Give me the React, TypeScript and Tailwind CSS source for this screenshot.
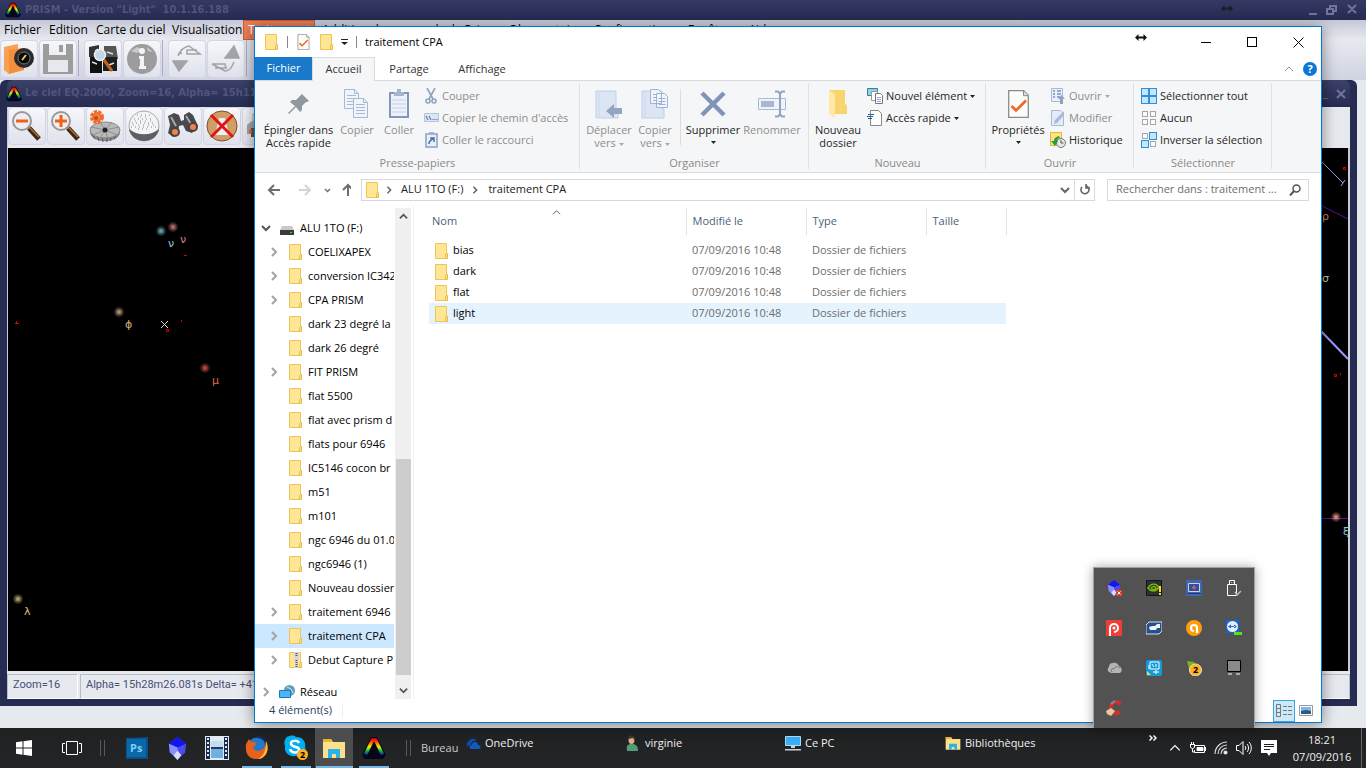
import React from 'react';

const files = ['bias', 'dark', 'flat', 'light'];

const tree = [
  { name: 'COELIXAPEX', open: true },
  { name: 'conversion IC342', open: true },
  { name: 'CPA PRISM', open: true },
  { name: 'dark 23 degré la' },
  { name: 'dark 26 degré' },
  { name: 'FIT PRISM', open: true },
  { name: 'flat 5500' },
  { name: 'flat avec prism d' },
  { name: 'flats pour 6946' },
  { name: 'IC5146 cocon br' },
  { name: 'm51' },
  { name: 'm101' },
  { name: 'ngc 6946 du 01.0' },
  { name: 'ngc6946 (1)' },
  { name: 'Nouveau dossier' },
  { name: 'traitement 6946', open: true },
  { name: 'traitement CPA', open: true, selected: true },
  { name: 'Debut Capture P', open: true, zip: true },
];

const Folder = ({ zip }: { zip?: boolean }) => (
  <svg width="13" height="16" viewBox="0 0 13 16" className="shrink-0">
    <path d="M.5.5h11v15H.5z" fill="#ffe596" stroke="#ecc757" />
    <path d="M10.500 15.500v-4l1-1h1v5z" fill="#ffe08a" stroke="#e6bd45" />
    {zip && <path d="M5 0h5v7l-1 2v7H6V9L5 7z" fill="#d8d8d8" />}
    {zip && <path d="M7.500 1v4M7.500 8v8" stroke="#555" strokeWidth="2" strokeDasharray="1 1" />}
  </svg>
);

const PrismLogo = ({ id, size }: { id: string; size: number }) => (
  <svg width={size} height={size} viewBox="0 0 24 24" className="shrink-0">
    <defs>
      <linearGradient id={id} x1="0" y1="0" x2="0" y2="1">
        <stop offset="0" stopColor="#f01010" />
        <stop offset=".28" stopColor="#ff9000" />
        <stop offset=".48" stopColor="#e8f000" />
        <stop offset=".72" stopColor="#10c838" />
        <stop offset="1" stopColor="#1428a0" />
      </linearGradient>
    </defs>
    <path d="M9 1h6l9 18-3 4H3l-3-4z" fill="#07071c" />
    <path d="M3.500 18.500L10.500 4h3l7 14.500" fill="none" stroke={`url(#${id})`} strokeWidth="3.500" strokeLinejoin="round" />
  </svg>
);

const Chevron = ({ d, color = '#555', size = 10, w = 2 }: { d: 'up' | 'down' | 'right'; color?: string; size?: number; w?: number }) => (
  <svg width={size} height={size} viewBox="0 0 10 10" fill="none" stroke={color} strokeWidth={w} className="shrink-0">
    <path d={d === 'up' ? 'M1 7l4-4 4 4' : d === 'down' ? 'M1 3l4 4 4-4' : 'M3 1l4 4-4 4'} />
  </svg>
);

const Caret = ({ color = '#222' }: { color?: string }) => (
  <svg width="5" height="3" viewBox="0 0 5 3" className="inline-block shrink-0 align-middle">
    <path d="M0 0h5L2.500 3z" fill={color} />
  </svg>
);

const Big = ({ icon, lines, off, caret, className }: { icon: React.ReactNode; lines: string[]; off?: boolean; caret?: boolean; className: string }) => (
  <button className={`flex flex-col items-center pt-[6px] leading-[13px] whitespace-nowrap ${off ? 'text-[#8d8d8d]' : 'text-[#262626]'} ${className}`}>
    <span className="mb-[2px] flex h-[34px] items-center">{icon}</span>
    {lines.map((l, i) => (
      <span key={l}>
        {l} {caret && lines.length > 1 && i === 1 && <Caret color="#aaa" />}
      </span>
    ))}
    {caret && lines.length === 1 && <span className="flex h-[13px] items-center"><Caret /></span>}
  </button>
);

const Small = ({ icon, label, off, caret }: { icon: React.ReactNode; label: string; off?: boolean; caret?: boolean }) => (
  <button className={`flex h-[22px] items-center gap-[3px] whitespace-nowrap ${off ? 'text-[#8d8d8d]' : 'text-[#262626]'}`}>
    <span className="flex w-4 shrink-0 justify-center">{icon}</span>
    <span>{label}</span>
    {caret && <span className="flex"><Caret color={off ? '#aaa' : '#222'} /></span>}
  </button>
);

const Group = ({ label, className, children }: { label: string; className: string; children: React.ReactNode }) => (
  <section className={`relative flex shrink-0 flex-col ${className}`}>
    <div className="flex h-[75px]">{children}</div>
    <div className="text-center leading-[14px] text-[#8a8a8a]">{label}</div>
    <span className="absolute top-[2px] right-0 h-[86px] w-px bg-[#e0e1e3]" />
  </section>
);

const Page = ({ x, y }: { x: number; y: number }) => (
  <g transform={`translate(${x} ${y})`}>
    <path d="M.5.5h10l4 4v15H.5z" fill="#f0f4fb" stroke="#a9b9d3" />
    <path d="M10.500.5v4h4M3 6.500h9M3 9.500h9M3 12.500h9M3 15.500h9" fill="none" stroke="#a9b9d3" />
  </g>
);

const CopyIcon = () => (
  <svg width="26" height="30" viewBox="0 0 26 30"><Page x={0} y={0} /><Page x={9} y={9} /></svg>
);

const CheckDoc = ({ w, h }: { w: number; h: number }) => (
  <svg width={w} height={h} viewBox="0 0 21 28">
    <path d="M.7.7h15l4.600 4.600v22H.7z" fill="#fbfbfb" stroke="#8c8c8c" strokeWidth="1.300" />
    <path d="M15.500.7v5h5" fill="#ddd" stroke="#8c8c8c" />
    <path d="M3.500 16l4.500 4.500 10-10" fill="none" stroke="#f4641c" strokeWidth="2.600" />
  </svg>
);

const DestIcon = ({ copy }: { copy?: boolean }) => (
  <svg width="28" height="30" viewBox="0 0 28 30">
    <path d="M1 2h20v18h2v9H1z" fill="#dbe5f4" stroke="#c0cfe6" />
    <path d="M4 3v25" stroke="#ccd9ed" />
    {copy ? (
      <>
        <path d="M9.500.5h8l3 3v11h-11zM15.500 4.500h8l3 3v11h-11z" fill="#f0f4fb" stroke="#9fb2d1" />
        <path d="M12 5.500h3M12 8.500h3M12 11.500h3M17.500 9.500h7M17.500 12.500h7M17.500 15.500h7" stroke="#9fb2d1" />
      </>
    ) : (
      <path d="M11 22l8-7v4h8v6h-8v4z" fill="#95a5c0" />
    )}
  </svg>
);

const Squares = ({ on }: { on: boolean[] }) => (
  <svg width="16" height="16" viewBox="0 0 16 16">
    {on.map((v, i) => (
      <rect
        key={i}
        x={(i % 2) * 8 + (v ? 0.5 : 1.5)}
        y={Math.floor(i / 2) * 8 + (v ? 0.5 : 1.5)}
        width={v ? 7 : 5}
        height={v ? 7 : 5}
        fill={v ? '#c4e6fb' : '#fafafa'}
        stroke={v ? '#2b90d8' : '#a6a6a6'}
      />
    ))}
  </svg>
);

const Magnifier = ({ plus }: { plus?: boolean }) => (
  <svg width="32" height="32" viewBox="0 0 32 32">
    <path d="M18 18l10 11" stroke="#3c2818" strokeWidth="5" />
    <path d="M18 17l10 10" stroke="#b56c26" strokeWidth="1.500" />
    <circle cx="11" cy="11" r="9" fill="#eceef2" stroke="#999" strokeWidth="2" />
    <path d={plus ? 'M5 11h12M11 5v12' : 'M5 11h12'} stroke="#f06018" strokeWidth="3" />
  </svg>
);

const mainTools = [
  <svg key="cam" width="32" height="32" viewBox="0 0 32 32">
    <path d="M1 4l14-3v26L6 31 1 27z" fill="#f9a055" /><path d="M6 7l15-2v22L6 31z" fill="#f28f3b" />
    <circle cx="21" cy="15" r="10" fill="#2a2a2e" /><circle cx="21" cy="15" r="6" fill="#090909" stroke="#777" /><path d="M19 17l4-5" stroke="#e0d35b" strokeWidth="2" />
  </svg>,
  <svg key="save" width="32" height="32" viewBox="0 0 32 32">
    <path d="M1 1h6v11h17V1h7v30H1z" fill="#9c9c9c" /><path d="M17 2h4v7h-4z" fill="#9c9c9c" /><path d="M6 17h20v12H6z" fill="#e7e8ee" />
  </svg>,
  <svg key="pics" width="32" height="32" viewBox="0 0 32 32">
    <path d="M2 4l10-2v12H2z" fill="#333" /><path d="M17 3h12l2 13H17z" fill="#555" /><path d="M3 14h12v16H3z" fill="#111" /><path d="M16 14h14v14H16z" fill="#1d1d1d" />
    <path d="M5 19l5 2M20 9l6 2M8 8l3-2M22 22l5-2" stroke="#ddd" strokeWidth="1.500" />
    <circle cx="13" cy="12" r="5.500" fill="#c2d5ea" stroke="#eee" strokeWidth="1.500" /><path d="M17 17l8 11" stroke="#c8641a" strokeWidth="3" />
  </svg>,
  <svg key="info" width="32" height="32" viewBox="0 0 32 32">
    <circle cx="16" cy="16" r="15" fill="#9c9c9c" /><path d="M5 8l6-4 5 2-5 4zM21 4l6 5-5-1z" fill="#c9cad0" /><circle cx="16" cy="8" r="3" fill="#f4f4f8" /><path d="M13 13h5v10h2v3h-7v-3h1v-7h-1z" fill="#f4f4f8" />
  </svg>,
  <svg key="down" width="32" height="32" viewBox="0 0 32 32" fill="none" stroke="#a3a3a5" strokeWidth="1.500">
    <path d="M2 18h14L8 28z" fill="#a3a3a5" /><path d="M7 13c2-5 5-9 11-10l11 8-13 0 0-4 10 0M7 11l4-1" />
  </svg>,
  <svg key="up" width="32" height="32" viewBox="0 0 32 32" fill="none" stroke="#a3a3a5" strokeWidth="1.500">
    <path d="M15 15h14L24 3z" fill="#a3a3a5" /><path d="M24 19c-2 5-4 9-9 9L2 21l13 0 1 4-11 0" />
  </svg>,
];

const skyTools = [
  <Magnifier key="minus" />,
  <Magnifier key="plus" plus />,
  <svg key="gear" width="32" height="32" viewBox="0 0 32 32">
    <path d="M1 20v3c2 11 28 11 30 0v-3z" fill="#8b8b8b" /><path d="M3 24l3 5M8 26l2 5M13 27l1 5M18 27v5M23 26l-2 5M28 24l-3 5" stroke="#555" />
    <ellipse cx="16" cy="20" rx="15" ry="8" fill="#b9b9b9" stroke="#8a8a8a" /><path d="M16 20L2 17M16 20L4 25M16 20L11 12M16 20l7-8M16 20l14-3M16 20l12 5M16 20l3 8M16 20l-5 8" stroke="#8f8f8f" />
    <circle cx="16" cy="20" r="2.500" fill="#222" /><circle cx="8" cy="7" r="5" fill="#f47d45" stroke="#f26b2a" strokeWidth="4" strokeDasharray="3 1" /><circle cx="7" cy="8" r="2" fill="#c04c12" />
  </svg>,
  <svg key="globe" width="32" height="32" viewBox="0 0 32 32">
    <circle cx="16" cy="16" r="15" fill="#f4f4f6" stroke="#aaa" /><path d="M1 19c8 7 22 7 30 0-1 7-7 12-15 12S2 26 1 19" fill="#5f5f63" />
    <path d="M6 9h20M4 13h24M3 17h26M9 5h14M10 19h12" stroke="#86819d" strokeDasharray="1 3" /><path d="M7 11h20M5 15h22M12 7h10" stroke="#6aa77d" strokeDasharray="1 4" />
  </svg>,
  <svg key="bino" width="32" height="32" viewBox="0 0 32 32">
    <path d="M1 6l6-3 5 2 2 6 3-1 0-5 5-3 4 3 5 11-6 7-6-2-3-6-4 1-1 8-5 3-5-4 2-8z" fill="#4a4a4e" /><path d="M4 7l5 9M19 6l5 8" stroke="#a5a5a8" strokeWidth="2" />
    <circle cx="8" cy="22" r="4" fill="#f08050" stroke="#444" strokeWidth="2" /><circle cx="26" cy="17" r="4" fill="#f08050" stroke="#444" strokeWidth="2" />
  </svg>,
  <svg key="nodome" width="32" height="32" viewBox="0 0 32 32">
    <circle cx="16" cy="16" r="15" fill="#d19c66" stroke="#7e4f2a" /><path d="M9 25l4-17h6l4 17z" fill="#eceef2" /><path d="M5 5l22 22M27 5L5 27" stroke="#df1414" strokeWidth="3" />
  </svg>,
  <svg key="print" width="32" height="32" viewBox="0 0 32 32">
    <path d="M8 4h16v8H8z" fill="#fff" stroke="#aaa" /><path d="M2 15l5-4h18l5 4v9H2z" fill="#a5a5a8" /><path d="M6 18h20v9H6z" fill="#555" /><path d="M4 20h3v3H4z" fill="#f06020" />
  </svg>,
];

const Star = ({ x, y, c }: { x: number; y: number; c: string }) => (
  <g fill={c}>
    <circle cx={x} cy={y} r="5" opacity=".2" />
    <circle cx={x} cy={y} r="3.500" opacity=".35" />
    <circle cx={x} cy={y} r="2" opacity=".7" />
  </g>
);

const ToolButton = ({ children }: { children: React.ReactNode }) => (
  <button className="flex h-[38px] w-[38px] shrink-0 items-center justify-center rounded border border-[#d3d5e2] bg-linear-to-b from-[#f6f7fa] to-[#dfe1ec]">{children}</button>
);

function SkyWindow() {
  return (
    <div className="mr-[9px] mb-[22px] flex min-h-0 flex-1 flex-col rounded-t-md border-x-[7px] border-b-[7px] border-[#262b52] bg-[#262b52]">
      <div className="flex h-[27px] shrink-0 items-center rounded-t-md bg-linear-to-b from-[#3b4168] to-[#262b52] font-['DejaVu_Sans_Condensed','DejaVu_Sans',sans-serif] text-[11px] font-bold text-[#50557a]">
        <span className="-ml-1 flex w-[22px] justify-center"><PrismLogo id="pl2" size={16} /></span>
        <span className="whitespace-nowrap">Le ciel EQ.2000, Zoom=16, Alpha= 15h11m</span>
        <span className="mr-1 ml-auto flex gap-2 text-[#636a90]">
          <span>_</span>
          <svg width="10" height="10" viewBox="0 0 10 10" stroke="#70769a" strokeWidth="2" className="mt-1"><path d="M1 1l8 8M9 1L1 9" /></svg>
        </span>
      </div>
      <div className="flex h-[41px] shrink-0 gap-px border-l border-[#c8cada] bg-[#e6e9ee]">
        {skyTools.map((t, i) => <ToolButton key={i}>{t}</ToolButton>)}
      </div>
      <div className="relative min-h-0 flex-1 overflow-hidden border-r-2 border-l border-[#c8cada] bg-black">
        <svg width="246" height="523" viewBox="8 148 246 523" className="absolute top-0 left-0 font-['DejaVu_Sans',sans-serif] text-[11px]">
          <Star x={161} y={231} c="#6fb4c4" />
          <Star x={173} y={227} c="#d07a78" />
          <Star x={119} y={312} c="#c9a582" />
          <Star x={205} y={368} c="#cf5450" />
          <Star x={18} y={599} c="#c4b878" />
          <text x="168" y="247" fill="#8cc4d8">ν</text>
          <text x="180" y="243" fill="#c98480">ν</text>
          <text x="125" y="328" fill="#d4b080">ϕ</text>
          <text x="212" y="384" fill="#e06850">μ</text>
          <text x="24" y="615" fill="#dcc878">λ</text>
          <path d="M161 321l7 7M168 321l-7 7" stroke="#ddd" />
          <path d="M184 255.500h3M181.500 320v2M15 323.500h4M16.500 321v2M166.500 329.500h2v2h-2z" stroke="#e00000" fill="none" />
        </svg>
        <svg width="40" height="523" viewBox="1308 148 40 523" className="absolute top-0 right-0 font-['DejaVu_Sans',sans-serif] text-[11px]">
          <path d="M1318 158l25 25M1345 180l-4 6" stroke="#9a9af0" fill="none" />
          <path d="M1318 204l30 15M1308 518.500h40" stroke="#5a109c" />
          <path d="M1318 328l30 31" stroke="#9a9aff" strokeWidth="2" />
          <path d="M1343.500 167.500h2v2h-2zM1334.500 374.500h2v2h-2zM1340.500 373v2" stroke="#e00000" fill="none" />
          <text x="1322" y="220" fill="#d68468">ρ</text>
          <text x="1322" y="282" fill="#cfcf90">σ</text>
          <Star x={1336} y={517} c="#ef9c88" />
          <text x="1343" y="535" fill="#8cc4d8">ξ</text>
        </svg>
      </div>
      <div className="flex h-[28px] shrink-0 gap-[2px] bg-[#e6e9ee] pt-[3px] font-['Roboto',sans-serif] text-[11px] leading-[19px] text-[#484d78]">
        <span className="w-[71px] border border-[#b9bcca] border-r-white border-b-white px-[5px]">Zoom=16</span>
        <span className="flex-1 border border-[#b9bcca] border-b-white px-[5px] whitespace-nowrap">Alpha= 15h28m26.081s Delta= +41175</span>
      </div>
    </div>
  );
}

function PrismWindow() {
  return (
    <div className="flex h-full flex-col bg-[#e6e9ee]">
      <div className="flex h-5 shrink-0 items-center bg-linear-to-b from-[#333963] to-[#262b52] font-['DejaVu_Sans_Condensed','DejaVu_Sans',sans-serif] text-[11px] font-bold text-[#50557a]">
        <span className="flex w-[25px] justify-center"><PrismLogo id="pl1" size={16} /></span>
        <span className="whitespace-pre">PRISM - Version "Light"  10.1.16.188</span>
        <svg width="52" height="12" viewBox="0 0 52 12" className="mr-2 ml-auto" stroke="#70769a" strokeWidth="2" fill="none">
          <path d="M3 10h8M21 5h6v5h-6zM24 4V2h6v5h-2M42 1l8 8M50 1l-8 8" />
        </svg>
      </div>
      <nav className="flex h-5 shrink-0 items-center bg-linear-to-b from-[#c6c8d8] to-[#e7e9ef] pl-1 text-[12px] leading-3 whitespace-nowrap text-black">
        <a href="#" className="w-[45px]">Fichier</a>
        <a href="#" className="w-[47px]">Edition</a>
        <a href="#" className="w-[76px]">Carte du ciel</a>
        <a href="#" className="w-[71px]">Visualisation</a>
        <a href="#" className="h-5 w-[72px] border border-[#c85c38] bg-[#ec7c54] pl-1 leading-[18px] text-white">Traitement</a>
        <span className="flex gap-3 pl-[7px]">
          <a href="#">Additional commands de Prism</a>
          <a href="#">Observatoire</a>
          <a href="#">Configurations</a>
          <a href="#">Fenêtres</a>
          <a href="#">Aide</a>
        </span>
      </nav>
      <div className="flex h-10 shrink-0 gap-px bg-linear-to-b from-[#e6e9ee] to-[#d0d3e1]">
        {mainTools.map((t, i) => (
          <React.Fragment key={i}>
            <ToolButton>{t}</ToolButton>
            {i % 2 === 1 && <span className="mr-1 h-9 w-px bg-[#a9acc4]" />}
          </React.Fragment>
        ))}
      </div>
      <SkyWindow />
    </div>
  );
}

function Ribbon() {
  return (
    <div className="flex h-[93px] shrink-0 overflow-hidden border-y border-[#dadbdc] bg-[#f5f6f7]">
      <Group label="Presse-papiers" className="w-[325px]">
        <Big
          className="ml-[3px] w-[81px]"
          lines={['Épingler dans', 'Accès rapide']}
          icon={<svg width="22" height="22" viewBox="0 0 22 22" fill="#8f979f"><path d="M14 1l7 7-2 1-1 0-4 4 0 4-2 2-4-5-7 7-1-1 7-7-5-4 2-2 4 0 4-4z" /></svg>}
        />
        <Big className="w-[36px]" off lines={['Copier']} icon={<CopyIcon />} />
        <Big
          className="w-[48px]"
          off
          lines={['Coller']}
          icon={
            <svg width="20" height="30" viewBox="0 0 20 30">
              <path d="M1 4h18v24H1z" fill="#edf2fa" stroke="#8395b8" strokeWidth="2" /><path d="M5 3h3V0h4v3h3v4H5z" fill="#a9b5ca" />
              <path d="M3 11h14M3 15h14M3 19h14M3 23h14" stroke="#c3d0e4" />
            </svg>
          }
        />
        <div className="flex flex-col pt-1">
          <Small off label="Couper" icon={<svg width="12" height="16" viewBox="0 0 12 16" fill="none" stroke="#8fa2c0" strokeWidth="1.600"><path d="M2 0l6 11M10 0L4 11" /><circle cx="3" cy="13" r="2" /><circle cx="9" cy="13" r="2" /></svg>} />
          <Small off label="Copier le chemin d'accès" icon={<svg width="15" height="10" viewBox="0 0 15 10"><path d="M.5.5h14v8H.5z" fill="#dbe5f3" stroke="#b4c4dd" /><path d="M2 3l2 4M5 3l2 4M8.500 6.500h1M10.500 6.500h1M12.500 6.500h1" stroke="#4a6690" /></svg>} />
          <Small off label="Coller le raccourci" icon={<svg width="13" height="16" viewBox="0 0 13 16"><path d="M1 2h11v13H1z" fill="#eaf0f9" stroke="#8ba0c4" strokeWidth="1.500" /><path d="M4 0h5v3H4z" fill="#a5b4cd" /><path d="M4 12c0-3 1-4 4-5M5 6h4v4" stroke="#4c6da0" strokeWidth="1.500" fill="none" /></svg>} />
        </div>
      </Group>
      <Group label="Organiser" className="w-[229px]">
        <Big className="ml-[2px] w-[54px]" off caret lines={['Déplacer', 'vers']} icon={<DestIcon />} />
        <Big className="w-[38px]" off caret lines={['Copier', 'vers']} icon={<DestIcon copy />} />
        <span className="mt-2 ml-[6px] h-[56px] w-px bg-[#dcdde0]" />
        <Big className="w-[64px]" caret lines={['Supprimer']} icon={<svg width="26" height="26" viewBox="0 0 26 26" stroke="#8193b6" strokeWidth="4.500"><path d="M2 2l22 22M24 2L2 24" /></svg>} />
        <Big
          className="w-[54px]"
          off
          lines={['Renommer']}
          icon={
            <svg width="28" height="28" viewBox="0 0 28 28" fill="none" stroke="#a9bad5">
              <path d="M.5 8.500h27v11H.5z" fill="#eef3fb" /><path d="M3 11h13v6H3z" fill="#a8b6d0" stroke="none" /><path d="M17 1.500h3l2 2 2-2h3M22 3v22M17 26.500h3l2-2 2 2h3" stroke="#93a4c1" strokeWidth="2" />
            </svg>
          }
        />
      </Group>
      <Group label="Nouveau" className="w-[177px]">
        <Big
          className="ml-[2px] w-[54px]"
          lines={['Nouveau', 'dossier']}
          icon={<svg width="19" height="28" viewBox="0 0 19 28"><path d="M0 0h16v14l2 1v9H5z" fill="#f7d56f" /><path d="M0 0l6 4v24L0 24z" fill="#ffe9a4" /></svg>}
        />
        <div className="flex flex-col pt-1 pl-[2px]">
          <Small caret label="Nouvel élément" icon={<svg width="16" height="16" viewBox="0 0 16 16"><path d="M.5.5h10v7H.5z" fill="#8fd0ee" stroke="#3a7c9c" /><path d="M4.500 3.500h6v9h-6z" fill="#fff" stroke="#999" /><path d="M8.500 5.500h5l2 2v8h-7z" fill="#fff" stroke="#777" /><path d="M10 9.500h4M10 11.500h4M10 13.500h4" stroke="#8fa8d8" /></svg>} />
          <Small caret label="Accès rapide" icon={<svg width="16" height="16" viewBox="0 0 16 16"><path d="M3.500.5h8l3 3v12h-11z" fill="#fff" stroke="#888" /><path d="M1 4.500h6M0 6.500h6M1 8.500h4" stroke="#1d5b9e" /></svg>} />
        </div>
      </Group>
      <Group label="Ouvrir" className="w-[148px]">
        <Big className="ml-[2px] w-[60px]" caret lines={['Propriétés']} icon={<CheckDoc w={21} h={28} />} />
        <div className="flex flex-col pt-1 pl-[2px]">
          <Small off caret label="Ouvrir" icon={<svg width="14" height="16" viewBox="0 0 14 16"><path d="M.5.5h11v13H.5z" fill="#e9effa" stroke="#a9b9d5" /><path d="M2 3h2M2 6h2M2 9h2M6 3h4M6 6h4M6 9h3" stroke="#7d94bd" strokeWidth="1.500" /><path d="M7 11l3.500-4 3.500 4h-2v5H9v-5z" fill="#8fa2c4" /></svg>} />
          <Small off label="Modifier" icon={<svg width="14" height="16" viewBox="0 0 14 16"><path d="M.5.5h9l3 3v12H.5z" fill="#e3ebf7" stroke="#a9b9d5" /><path d="M3 14l1-4 9-9v4l-7 8z" fill="#a8bad8" /></svg>} />
          <Small label="Historique" icon={<svg width="16" height="16" viewBox="0 0 16 16"><path d="M.5.5h11v13H.5z" fill="#ffe284" stroke="#e0b63c" /><circle cx="11" cy="11" r="4.500" fill="#e7e7e7" stroke="#777" /><path d="M11 8v3h2.500" stroke="#555" fill="none" /><path d="M9 4C5 5 4 7 4 9H1l4 5 3-5H7c0-2 1-3 3-3z" fill="#27a03a" /></svg>} />
        </div>
      </Group>
      <Group label="Sélectionner" className="w-[138px]">
        <div className="flex flex-col pt-1 pl-[7px]">
          <Small label="Sélectionner tout" icon={<Squares on={[true, true, true, true]} />} />
          <Small label="Aucun" icon={<Squares on={[false, false, false, false]} />} />
          <Small label="Inverser la sélection" icon={<Squares on={[false, true, true, false]} />} />
        </div>
      </Group>
    </div>
  );
}

function Explorer() {
  return (
    <div className="absolute top-[26px] right-11 bottom-[5px] left-[254px] flex flex-col border border-[#0078d7] bg-white text-[11px] shadow-[0_2px_14px_rgba(0,0,0,0.45)]">
      <div className="flex h-[30px] shrink-0 items-center pl-[10px]">
        <Folder />
        <span className="mx-[9px] h-3 w-px bg-[#888]" />
        <CheckDoc w={13} h={16} />
        <span className="ml-[10px] flex"><Folder /></span>
        <svg width="7" height="6" viewBox="0 0 7 6" className="ml-2"><path d="M0 0h7v1H0zM0 3h7L3.500 6z" fill="#222" /></svg>
        <span className="mx-[8px] h-3 w-px bg-[#888]" />
        <h1 className="leading-3 text-black">traitement CPA</h1>
        <div className="ml-auto flex h-full">
          <button aria-label="Réduire" className="flex w-[46px] items-center justify-center"><span className="h-px w-[10px] bg-black" /></button>
          <button aria-label="Agrandir" className="flex w-[46px] items-center justify-center"><span className="h-[10px] w-[10px] border border-black" /></button>
          <button aria-label="Fermer" className="flex w-[46px] items-center justify-center">
            <svg width="11" height="11" viewBox="0 0 11 11" stroke="#000"><path d="M.5.5l10 10M10.500.5l-10 10" /></svg>
          </button>
        </div>
      </div>
      <div className="relative z-10 -mb-px flex h-6 shrink-0 text-[#333]">
        <button className="mb-px w-[57px] bg-[#1979ca] text-white">Fichier</button>
        <button className="w-[63px] border border-b-0 border-[#dadbdc] bg-[#f5f6f7]">Accueil</button>
        <button className="w-[68px]">Partage</button>
        <button className="w-[78px]">Affichage</button>
        <div className="mr-1 ml-auto flex items-center gap-[9px]">
          <Chevron d="up" color="#999" w={1} />
          <button className="h-[14px] w-[14px] rounded-full bg-[#0a78d4] text-[11px] leading-[14px] font-bold text-white">?</button>
        </div>
      </div>
      <Ribbon />
      <div className="flex h-[33px] shrink-0 items-center pl-3">
        <svg width="84" height="14" viewBox="0 0 84 14" fill="none" stroke="#6e6e6e" strokeWidth="2">
          <path d="M1.500 7H13M7 2L2 7l5 5" />
          <path d="M32 7h11.500M38 2l5 5-5 5" stroke="#d4d4d4" />
          <path d="M58 6l2.500 2.500L63 6" strokeWidth="1.500" />
          <path d="M81 1.500V13M76 7l5-5 5 5" />
        </svg>
        <div className="ml-[10px] flex h-[22px] flex-1 items-center border border-[#d9d9d9] pl-1 text-[#222]">
          <Folder />
          <span className="mx-[6px]"><Chevron d="right" color="#666" size={8} /></span>
          <span className="ml-[2px]">ALU 1TO (F:)</span>
          <span className="mx-2"><Chevron d="right" color="#666" size={8} /></span>
          <span className="ml-px">traitement CPA</span>
          <span className="mr-[4px] ml-auto"><Chevron d="down" color="#666" /></span>
          <button aria-label="Actualiser" className="flex h-full w-5 items-center justify-center border-l border-[#d9d9d9]">
            <svg width="10" height="11" viewBox="0 0 10 11" fill="none" stroke="#666" strokeWidth="1.600"><path d="M6.500 2A4 4 0 1 1 2 3M6 0v4h4" /></svg>
          </button>
        </div>
        <div className="mr-3 ml-3 flex h-[22px] w-[202px] items-center border border-[#d9d9d9] pr-[7px] pl-2">
          <input aria-label="Rechercher" className="min-w-0 flex-1 text-[11px] outline-none placeholder:text-[#6d6d6d]" placeholder="Rechercher dans : traitement ..." />
          <svg width="12" height="12" viewBox="0 0 12 12" fill="none" stroke="#555" strokeWidth="1.500"><circle cx="7.500" cy="4.500" r="3.500" /><path d="M5 7l-4 4.500" strokeWidth="2" /></svg>
        </div>
      </div>
      <div className="flex min-h-0 flex-1">
        <div className="mt-2 h-[485px] w-[139px] shrink-0 overflow-hidden pt-[2px] whitespace-nowrap text-black">
          <div className="flex h-6 items-center pl-[6px]">
            <Chevron d="down" />
            <svg width="14" height="9" viewBox="0 0 14 9" className="mt-1 mr-[6px] ml-[9px] shrink-0"><path d="M2 0h10l2 4H0z" fill="#c9c9c9" /><path d="M0 4h14v5H0z" fill="#3a3a3a" /><path d="M10 6h2v1h-2z" fill="#35e04a" /></svg>
            ALU 1TO (F:)
          </div>
          {tree.map((t) => (
            <div key={t.name} className={`flex h-6 items-center gap-[6px] pl-[14px] ${t.selected ? 'bg-[#cce8ff]' : ''}`}>
              <span className="-mr-px flex w-[15px] shrink-0">{t.open && <Chevron d="right" color="#a2a2a2" />}</span>
              <Folder zip={t.zip} />
              <span className="shrink-0">{t.name}</span>
            </div>
          ))}
          <div className="mt-[11px] flex h-[18px] items-center pl-[6px] leading-[14px]">
            <Chevron d="right" color="#a2a2a2" />
            <svg width="16" height="14" viewBox="0 0 16 14" className="mr-[5px] ml-2 shrink-0"><circle cx="10.500" cy="5.500" r="5.500" fill="#5f9dbd" /><path d="M8 2l4 2 2 4" stroke="#cfe6ef" fill="none" /><path d="M.5 5.500h11v7H.5z" fill="#4cb5f5" stroke="#1d79bb" /></svg>
            Réseau
          </div>
        </div>
        <div className="mt-[2px] ml-px flex h-[491px] w-4 shrink-0 flex-col items-center bg-[#f0f0f0] py-1">
          <Chevron d="up" size={9} />
          <span className="mt-auto mb-[11px] h-[216px] w-[15px] bg-[#cdcdcd]" />
          <Chevron d="down" size={9} />
        </div>
        <div className="mr-[15px] ml-[2px] w-px bg-[#f0f0f0]" />
        <div className="pt-[2px]">
          <table className="table-fixed border-collapse text-left">
            <thead>
              <tr className="h-[27px] text-[#4c607a]">
                <th className="relative w-[257px] border-r border-[#e5e5e5] pl-[3px] font-normal">
                  Nom
                  <span className="absolute top-0 left-[123px]"><Chevron d="up" size={9} w={1} /></span>
                </th>
                <th className="w-[120px] border-r border-[#e5e5e5] pl-[6px] font-normal">Modifié le</th>
                <th className="w-[120px] border-r border-[#e5e5e5] pl-[6px] font-normal">Type</th>
                <th className="w-[80px] border-r border-[#e5e5e5] pl-[6px] font-normal">Taille</th>
              </tr>
              <tr className="h-[5px]"><td colSpan={4} /></tr>
            </thead>
            <tbody>
              {files.map((f) => (
                <tr key={f} className={`h-[21px] text-[#6d6d6d] ${f === 'light' ? 'bg-[#e5f3ff]' : ''}`}>
                  <td className="pl-[6px]"><div className="flex items-center gap-[5px] text-black"><Folder />{f}</div></td>
                  <td className="pl-[6px]">07/09/2016 10:48</td>
                  <td className="pl-[6px]">Dossier de fichiers</td>
                  <td />
                </tr>
              ))}
            </tbody>
          </table>
        </div>
      </div>
      <div className="flex h-[23px] shrink-0 items-center bg-white pl-[14px] text-[#27415e]">
        4 élément(s)
        <span className="ml-[10px] h-3 w-px bg-[#eee]" />
        <button aria-label="Détails" className="ml-auto flex h-[22px] w-[22px] items-center justify-center border border-[#3ba3dd] bg-[#cde8f6]">
          <svg width="16" height="14" viewBox="0 0 16 14" fill="none" stroke="#777"><path d="M.5.5h4v12h-4zM.5 4.500h4M.5 8.500h4M7 2.500h4M12 2.500h4M7 6.500h4M12 6.500h4M7 10.500h4M12 10.500h4" /></svg>
        </button>
        <button aria-label="Grandes icônes" className="mr-2 ml-1">
          <svg width="14" height="11" viewBox="0 0 14 11"><path d="M.5.5h13v10H.5z" fill="#fff" stroke="#999" /><path d="M2 2h10v4H2z" fill="#7fb6ea" /><path d="M2 6l5-1 5 1v3H2z" fill="#2b5c78" /></svg>
        </button>
      </div>
    </div>
  );
}

const Gem = ({ s }: { s: number }) => (
  <svg width={s} height={s} viewBox="0 0 24 24"><path d="M12 0l9 7-1 9-8 8-8-8-1-9z" fill="#4a4cf0" /><path d="M12 0l9 7-9 4-9-4z" fill="#1414f0" /><path d="M12 11v13l-8-8-1-9z" fill="#8a8ef8" /><path d="M12 14l4 5-4 5-4-5z" fill="#dcdcff" /></svg>
);

const trayIcons = [
  <span key="a" className="relative flex"><Gem s={16} /><svg width="6" height="6" viewBox="0 0 6 6" className="absolute right-0 bottom-0"><path d="M0 0h6v6H0z" fill="#e33a22" /><path d="M1.500 1.500l3 3M4.500 1.500l-3 3" stroke="#fff" /></svg></span>,
  <svg key="b" width="16" height="16" viewBox="0 0 16 16"><path d="M.5.5h15v15H.5z" fill="#29303a" stroke="#151515" /><path d="M2 8c3-5 7-5 11-1-3 5-8 5-11 1zM5 8c2-2 4-2 5 0-1 2-4 2-5 0" fill="none" stroke="#76b900" strokeWidth="1.500" /><path d="M13 6h2v6h-2zM13 13h2v2h-2z" fill="#ffd91a" /></svg>,
  <svg key="c" width="16" height="16" viewBox="0 0 16 16"><path d="M0 0h16v16H0z" fill="#3f66b4" /><path d="M2.500 3.500h11v8h-11z" fill="#35508f" stroke="#c5d2ec" /><path d="M1 13.500h14" stroke="#22386c" /><path d="M6 7.500h4M8 5.500v4" stroke="#d8587c" strokeWidth="1.500" /></svg>,
  <svg key="d" width="16" height="16" viewBox="0 0 16 16" fill="none" stroke="#fff"><path d="M3.500.5h5v4h-5zM1.500 4.500h9v11h-9zM5 2.500h.5M7 2.500h.5" /><path d="M9 12l2 3 4-4" stroke="#bbb" strokeWidth="1.500" /></svg>,
  <svg key="e" width="16" height="16" viewBox="0 0 16 16"><path d="M0 0h16v16H0z" fill="#ee3e36" /><path d="M4 16V8a4 4 0 1 1 4 4" fill="none" stroke="#fff" strokeWidth="2" /><circle cx="8" cy="8" r="1.500" fill="#fff" /></svg>,
  <svg key="f" width="16" height="14" viewBox="0 0 16 14"><path d="M3 1h13v9l-3 3H0V4z" fill="#244f91" stroke="#d9e2ee" /><path d="M3 6l3-1h3l2-2h3v4h-3l-1 2H4z" fill="#f1f1f1" /></svg>,
  <svg key="g" width="16" height="16" viewBox="0 0 16 16"><circle cx="8" cy="8" r="8" fill="#ff9d0c" /><path d="M11 13V8a3 3 0 1 0-3 3" fill="none" stroke="#fff" strokeWidth="2.200" /></svg>,
  <svg key="h" width="16" height="16" viewBox="0 0 16 16"><path d="M0 0h13v13H0z" fill="#0c68dc" /><circle cx="6.500" cy="6.500" r="5.500" fill="#eee" /><path d="M2 6.500l3-2v4zM11 6.500l-3-2v4zM4 6h5v1H4z" fill="#0c68dc" /><path d="M8 12h8v3H8z" fill="#52e31a" /></svg>,
  <svg key="i" width="16" height="12" viewBox="0 0 16 12"><path d="M3 10a3 3 0 0 1 0-5 4 4 0 0 1 4-4c3-1 5 1 6 3 4 2 3 7 0 7H5z" fill="#b4b4b4" /><path d="M6 10c-2-3 1-4 2-3 1-3 4-3 6-1" stroke="#777" fill="none" /></svg>,
  <svg key="j" width="16" height="16" viewBox="0 0 16 16"><rect width="16" height="16" rx="2" fill="#129bd8" /><path d="M4 2h9v7H4zM6 4l2 3M10 4v3M7 12h6M10 10v4M3 5v4" stroke="#fff" fill="none" /><path d="M1 11l4 4H1z" fill="#ffd33a" /></svg>,
  <svg key="k" width="16" height="16" viewBox="0 0 16 16"><path d="M1 1l7 1 4 5-5 5-4-3z" fill="#76b51b" /><circle cx="9.500" cy="10" r="6" fill="#ffb020" stroke="#f4e1b6" /><text x="7" y="13" fontSize="9" fontWeight="bold">2</text></svg>,
  <svg key="l" width="16" height="16" viewBox="0 0 16 16" stroke="#000"><path d="M1.500.5h13v11h-13z" fill="#8a8a8a" /><path d="M2 13h4v2H2zM10 13h4v2h-4z" fill="#aaa" stroke="none" /></svg>,
  <svg key="m" width="16" height="16" viewBox="0 0 16 16"><path d="M14 5C12 0 6 1 5 6s4 9 9 6" fill="none" stroke="#c9342a" strokeWidth="4" /><path d="M0 11l5-3 4 3-4 5-4-2z" fill="#e7c9a0" /><path d="M5 4l4-3" stroke="#4d9bd0" strokeWidth="2" /></svg>,
];

const ExplorerIcon = ({ s }: { s: number }) => (
  <svg width={s} height={s} viewBox="0 0 24 24" className="shrink-0"><path d="M1 3h8l2 3h12v16H1z" fill="#ffe08a" /><path d="M1 3h8l1 3H1z" fill="#e8b637" /><path d="M6 22v-9h12v9h-4v-4h-4v4z" fill="#29b3e8" /></svg>
);

const shortcuts = [
  { name: 'OneDrive', icon: <svg width="16" height="11" viewBox="0 0 16 11"><path d="M3 9a3 3 0 0 1 0-5 5 5 0 0 1 9-1c-4-1-6 2-6 4-3 0-3 2-3 2z" fill="#0a4cb0" /><path d="M6 11a2 2 0 0 1 1-4 3 3 0 0 1 6 0 2 2 0 0 1 1 4z" fill="#1456c4" /></svg> },
  { name: 'virginie', icon: <svg width="16" height="16" viewBox="0 0 16 16"><path d="M2 16c-1-6 1-7 5-7s6 2 6 7z" fill="#4f9c76" /><ellipse cx="6.500" cy="5" rx="3" ry="4" fill="#e2ae88" /><path d="M3 4c0-5 7-5 7 0v2L8 3z" fill="#3c352e" /></svg> },
  { name: 'Ce PC', icon: <svg width="16" height="15" viewBox="0 0 16 15"><path d="M.5.5h15v9H.5z" fill="#39aef5" stroke="#a9dcfa" /><path d="M6 10h4v2H6zM0 13h16v1.500H0z" fill="#c6d3dc" /></svg> },
  { name: 'Bibliothèques', icon: <ExplorerIcon s={16} /> },
];

const apps = [
  { name: 'Photoshop', w: 'w-10', run: '', icon: <svg width="22" height="22" viewBox="0 0 22 22"><path d="M0 1l22-1v22H0z" fill="#0a4e8c" /><path d="M1 2h19v18H1z" fill="#0868a8" /><text x="4" y="15" fontSize="11" fontWeight="bold" fill="#7cd2fa">Ps</text></svg> },
  { name: 'Gem', w: 'w-10', run: '', icon: <Gem s={23} /> },
  { name: 'Video', w: 'w-10', run: '', icon: <svg width="24" height="24" viewBox="0 0 24 24"><path d="M0 0h24v24H0z" fill="#e2eaf4" /><path d="M1 1h4v22H1zM19 1h4v22h-4z" fill="#1a2a4a" /><path d="M3 2v20M21 2v20" stroke="#dfe9f5" strokeWidth="2" strokeDasharray="2 2" /><path d="M6 5h12v6H6z" fill="#c4dcf2" /><path d="M6 13h12v9H6z" fill="#6fb0e0" /><path d="M6 11h12v2H6z" fill="#26395c" /></svg> },
  { name: 'Firefox', w: 'w-10', run: 'w-[30px]', icon: <svg width="24" height="24" viewBox="0 0 24 24"><circle cx="12" cy="11.500" r="10" fill="#2478c8" /><path d="M12 1c6 0 9 4 9 9" stroke="#102e6a" strokeWidth="2" fill="none" /><path d="M1 8l3-5 2 3 4 0 1 3-3 2c1 4 6 5 8 3 2-2 5-1 5-9 4 9 0 18-9 18S0 17 1 8z" fill="#e8611c" /><path d="M21 5c4 9 0 17-8 18 5-3 8-7 8-18z" fill="#ffb63c" /></svg> },
  { name: 'Skype', w: 'w-[38px]', run: 'w-[30px]', icon: <svg width="26" height="26" viewBox="0 0 26 26"><path d="M7 1c3-1 5 0 6 1 7 0 10 5 9 10 3 7-3 12-9 9C5 22 1 17 2 11 0 6 3 1 7 1z" fill="#00aff0" /><path d="M16 8c-1-3-9-3-8 1s9 2 8 6-8 3-9-1" fill="none" stroke="#fff" strokeWidth="2.500" /><circle cx="19.500" cy="19.500" r="5.500" fill="#ffb020" /><text x="17" y="23" fontSize="9" fontWeight="bold">2</text></svg> },
  { name: 'Explorateur', w: 'w-[38px] bg-[#4d4d4d]', run: 'w-[37px]', icon: <ExplorerIcon s={24} /> },
  { name: 'PRISM', w: 'w-[42px]', run: 'w-[30px]', icon: <PrismLogo id="pl3" size={24} /> },
];

const Grip = () => <span className="h-4 w-[5px] border-x border-[#5a5a5a]" />;

function Taskbar() {
  return (
    <footer className="flex h-10 shrink-0 items-center bg-linear-to-b from-[#202122] to-[#242526] text-[11px] text-[#f0f0f0]">
      <button aria-label="Démarrer" className="flex w-12 justify-center">
        <svg width="16" height="16" viewBox="0 0 16 16" fill="#fff"><path d="M0 2.300l6.500-1V7.500H0zM7.500 1.200L16 0v7.500H7.500zM0 8.500h6.500v6.200L0 13.700zM7.500 8.500H16V16l-8.500-1.200z" /></svg>
      </button>
      <button aria-label="Vue des tâches" className="flex w-12 justify-center">
        <svg width="20" height="14" viewBox="0 0 20 14" fill="none" stroke="#fff"><path d="M4.500.5h11v13h-11zM3 2.500H.5v9H3M17 2.500h2.500v9H17" /></svg>
      </button>
      <span className="ml-[4px] flex w-[17px]"><Grip /></span>
      {apps.map((a) => (
        <button key={a.name} aria-label={a.name} className={`relative flex h-10 shrink-0 items-center justify-center ${a.w}`}>
          {a.icon}
          {a.run && <span className={`absolute bottom-0 h-[2px] bg-[#76b9ed] ${a.run}`} />}
        </button>
      ))}
      <span className="ml-[11px] flex w-[15px]"><Grip /></span>
      <span className="w-[44px] text-[#ccc]">Bureau</span>
      <div className="mb-[10px] flex min-w-0 flex-1">
        {shortcuts.map((s) => (
          <a key={s.name} href="#" className="flex w-40 items-center gap-1">
            {s.icon}
            {s.name}
          </a>
        ))}
      </div>
      <svg width="8" height="6" viewBox="0 0 8 6" fill="none" stroke="#fff" strokeWidth="1.500" className="mr-[12px] mb-5"><path d="M.5.5L3 3 .5 5.500M4.500.5L7 3 4.500 5.500" /></svg>
      <div className="flex items-center gap-2">
        <Chevron d="up" color="#fff" size={12} w={1} />
        <svg width="17" height="12" viewBox="0 0 17 12" fill="none" stroke="#fff"><path d="M6 3.500h9.500v7H5.500V8M16.500 5v4M1 2.500h5M1.500 3v2c0 2 4 2 4 0V3M3.500 7v3h2M2.500 0v2M4.500 0v2" /><path d="M8 5.500h6v3H8z" fill="#fff" /></svg>
        <svg width="14" height="14" viewBox="0 0 14 14" fill="none" stroke="#ddd" strokeWidth="1.200"><path d="M1 13A12 12 0 0 1 13 1M4 13a9 9 0 0 1 9-9M7 13a6 6 0 0 1 6-6" /><circle cx="11.500" cy="11.500" r="1.500" fill="#fff" /></svg>
        <svg width="17" height="14" viewBox="0 0 17 14" fill="none" stroke="#fff"><path d="M.5 4.500H3l4-4v13l-4-4H.5zM9 5c1 1 1 3 0 4M11 3c2 2 2 6 0 8M13 1c3 3 3 9 0 12" /></svg>
        <svg width="16" height="16" viewBox="0 0 16 16"><path d="M0 0h16v13h-6l-2 3-2-3H0z" fill="#fff" /><path d="M3 4.500h10M3 6.500h10M3 9.500h6" stroke="#222" /></svg>
      </div>
      <div className="ml-[13px] w-[64px] text-center leading-[17px]">18:21<br />07/09/2016</div>
      <span className="mr-1 ml-[7px] h-10 w-px bg-[#666]" />
    </footer>
  );
}

export default function App() {
  return (
    <div className="flex h-screen flex-col overflow-hidden bg-[#202122] font-['Open_Sans','Noto_Sans',sans-serif]">
      <main className="relative min-h-0 flex-1">
        <PrismWindow />
        <Explorer />
        <svg width="12" height="7" viewBox="0 0 12 7" className="absolute top-[34px] right-[219px]"><path d="M0 3.500L3.500 0v2.500h5V0L12 3.500 8.500 7V4.500h-5V7z" fill="#111" /></svg>
        <svg width="12" height="7" viewBox="0 0 12 7" className="absolute top-[5px] right-[133px]"><path d="M0 3.500L3.500 0v2.500h5V0L12 3.500 8.500 7V4.500h-5V7z" fill="#1c1c24" /></svg>
        <div className="absolute right-[111px] bottom-0 grid h-[161px] grid-cols-4 content-start border border-b-0 border-[#a0a0a0] bg-[#525252] shadow-[0_0_10px_rgba(0,0,0,0.35)]">
          {trayIcons.map((icon, i) => (
            <button key={i} aria-label="Icône de notification" className="flex h-10 w-10 items-center justify-center">{icon}</button>
          ))}
        </div>
      </main>
      <Taskbar />
    </div>
  );
}
